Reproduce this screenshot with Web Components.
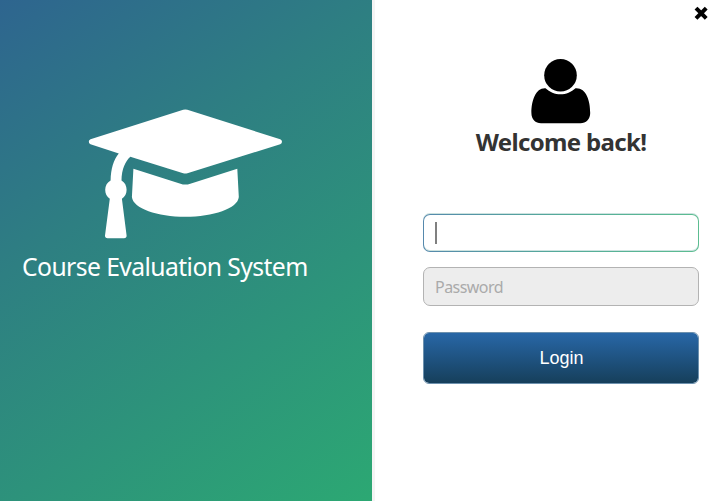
<!DOCTYPE html>
<html lang="en">
<head>
<meta charset="utf-8">
<title>Course Evaluation System</title>
<style>
html, body { margin: 0; height: 100%; background: #fff; overflow: hidden; font-family: "Noto Sans", "Open Sans", sans-serif; }
</style>
</head>
<body>
<login-window></login-window>
<script>
function define(name, html) {
  customElements.define(name, class extends HTMLElement {
    constructor() {
      super();
      this.attachShadow({ mode: 'open' }).innerHTML = html;
    }
  });
}

define('brand-panel', `
<style>
:host { display: flex; flex-direction: column; box-sizing: border-box; width: 375px; height: 501px; padding-top: 109px; border-right: 3px solid #f4f4f4; background: linear-gradient(144deg, #2e658f 0%, #2e7f82 36%, #2ca873 100%) padding-box; color: #fff; }
svg { display: block; width: 194px; height: 130px; margin-left: 88px; }
h1 { margin: 9px 0 0 22px; font-size: 26px; line-height: 36px; font-weight: 400; white-space: nowrap; letter-spacing: -0.6px; transform: scaleX(.949); transform-origin: left; }
</style>
<svg viewBox="88 109 194 130" fill="#fff">
<path d="M183.2 109.8Q185.3 109.2 187.4 109.8L280.2 139.2Q282 140 282 141.8Q282 143.6 280.2 144.3L187.4 173.2Q185.3 173.9 183.2 173.2L130.3 156.7C125.5 161 121.6 169 121.5 180.5C124.8 182.4 126.6 185.8 126.6 189.8C126.6 193.6 125 196.9 121.9 198.8L126.6 235.5Q126.8 238.2 124 238.2H107.6Q104.8 238.2 105 235.5L109.8 198.8C106.8 196.9 105.2 193.6 105.2 189.8C105.2 185.6 107.2 182.2 110.6 180.4C110.9 168.5 113.5 159.7 118.8 153.4L90.5 144.3Q88.8 143.6 88.8 141.8Q88.8 140 90.5 139.2Z"/>
<path d="M133.4 168.8L180.5 183.7Q185.3 185.5 190.3 183.7L237.3 168.8L238.8 197C238 208.5 213 216.8 185.3 216.8C157.5 216.8 133 208.5 131.9 197Z"/>
</svg>
<h1><slot></slot></h1>`);

define('close-button', `
<style>
:host { display: block; width: 14px; height: 14px; }
svg { display: block; }
</style>
<svg width="14" height="14" viewBox="0 0 14 14"><path d="M3.4 3.5L10.8 10.9M10.8 3.5L3.4 10.9" stroke="#000" stroke-width="4" stroke-linecap="square" stroke-linejoin="round"/></svg>`);

define('user-greeting', `
<style>
:host { display: flex; flex-direction: column; align-items: center; color: #333; }
svg { display: block; width: 60px; height: 66px; }
h2 { margin: 1px 0 0; font-size: 24px; line-height: 34px; font-weight: 700; white-space: nowrap; letter-spacing: -0.65px; }
</style>
<svg viewBox="0 0 60 66"><circle cx="29.5" cy="17.300" r="16.3"/><path d="M14.5 30.2C18.5 34 24 36.3 29.5 36.3C35 36.3 40.5 34 44.5 30.2C55 29.5 59.2 42 59.2 55C59.2 61.5 55 65.3 49.5 65.3H10C4.5 65.3 .4 61.5 .4 55C.4 42 5 29.5 14.5 30.2Z"/></svg>
<h2><slot></slot></h2>`);

define('text-field', `
<style>
:host { display: flex; align-items: center; box-sizing: border-box; width: 276px; height: 39px; padding-left: 11px; border: 1px solid #b3b3b3; border-radius: 7px; background: #ededed; color: #aaa; font-size: 16px; letter-spacing: -0.55px; }
:host([active]) { height: 38px; border-color: transparent; background: linear-gradient(#fff, #fff) padding-box, linear-gradient(90deg, #5689ad, #55ab9a 50%, #5cbd91) border-box; box-shadow: 0 -1px 0 rgba(85, 160, 150, .3), inset 0 -1px 0 rgba(85, 160, 150, .3); }
i { display: none; width: 2px; height: 22px; background: #808080; }
:host([active]) i { display: block; }
</style><i></i><slot></slot>`);

define('login-button', `
<style>
:host { display: flex; align-items: center; justify-content: center; box-sizing: border-box; width: 276px; height: 52px; padding-left: 1px; border: 1px solid #6d91ae; border-radius: 6px; background: linear-gradient(#2867a7, #163f5b) padding-box; color: #fff; font: 18px "Liberation Sans", Arial, sans-serif; }
</style><slot></slot>`);

define('login-form', `
<style>
:host { display: flex; flex-direction: column; flex: 1; align-items: flex-start; padding-left: 48px; }
close-button { margin: 6px 17px 0 auto; }
user-greeting { width: 276px; margin-top: 38px; }
text-field { margin-top: 15px; }
text-field[active] { margin-top: 55px; }
login-button { margin-top: 26px; }
</style>
<close-button></close-button>
<user-greeting>Welcome back!</user-greeting>
<text-field active></text-field>
<text-field>Password</text-field>
<login-button>Login</login-button>`);

define('login-window', `
<style>:host { display: flex; width: 725px; height: 501px; }</style>
<brand-panel>Course Evaluation System</brand-panel>
<login-form></login-form>`);
</script>
</body>
</html>
